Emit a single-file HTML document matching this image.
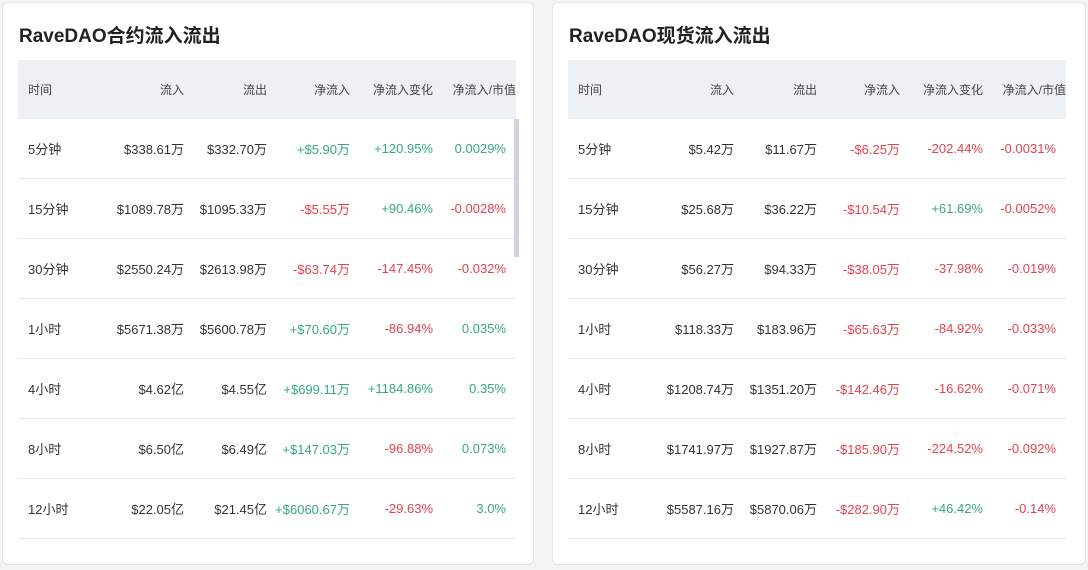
<!DOCTYPE html><html><head><meta charset="utf-8"><style>
body{margin:0;width:1088px;height:570px;background:#f3f3f3;font-family:"Liberation Sans","Noto Sans CJK SC",sans-serif;overflow:hidden;position:relative}
.card{position:absolute;top:2px;width:532px;height:563px;background:#fff;border:1px solid #e6e6e6;border-radius:6px;box-sizing:border-box}
.t{position:absolute;left:16px;top:18px;font-size:19px;font-weight:bold;color:#222}
table{position:absolute;left:15px;top:57px;width:498px;border-collapse:collapse;table-layout:fixed;font-size:13px;color:#333}
td{height:59px;border-bottom:1px solid #e8e8e8;text-align:right;padding:0;white-space:nowrap}
td:first-child{text-align:left;padding-left:10px}
tr.h td{background:#eef1f3;height:59px;font-size:12px;color:#444;border-bottom:none}
td:last-child{padding-right:10px}
tr.h td:last-child{padding-right:0}
.g{color:#35a882}.r{color:#e5414f}
.sb{position:absolute;left:511px;top:116px;width:5px;height:138px;background:#d0d4e0}
</style></head><body>
<div class="card" style="left:2px">
<div class="t">RaveDAO合约流入流出</div>
<table><colgroup><col style="width:83px"><col style="width:83px"><col style="width:83px"><col style="width:83px"><col style="width:83px"><col style="width:83px"></colgroup>
<tr class="h"><td>时间</td><td>流入</td><td>流出</td><td>净流入</td><td>净流入变化</td><td>净流入/市值</td></tr>
<tr><td>5分钟</td><td>$338.61万</td><td>$332.70万</td><td class="g">+$5.90万</td><td class="g">+120.95%</td><td class="g">0.0029%</td></tr>
<tr><td>15分钟</td><td>$1089.78万</td><td>$1095.33万</td><td class="r">-$5.55万</td><td class="g">+90.46%</td><td class="r">-0.0028%</td></tr>
<tr><td>30分钟</td><td>$2550.24万</td><td>$2613.98万</td><td class="r">-$63.74万</td><td class="r">-147.45%</td><td class="r">-0.032%</td></tr>
<tr><td>1小时</td><td>$5671.38万</td><td>$5600.78万</td><td class="g">+$70.60万</td><td class="r">-86.94%</td><td class="g">0.035%</td></tr>
<tr><td>4小时</td><td>$4.62亿</td><td>$4.55亿</td><td class="g">+$699.11万</td><td class="g">+1184.86%</td><td class="g">0.35%</td></tr>
<tr><td>8小时</td><td>$6.50亿</td><td>$6.49亿</td><td class="g">+$147.03万</td><td class="r">-96.88%</td><td class="g">0.073%</td></tr>
<tr><td>12小时</td><td>$22.05亿</td><td>$21.45亿</td><td class="g">+$6060.67万</td><td class="r">-29.63%</td><td class="g">3.0%</td></tr>
</table><div class="sb"></div></div>
<div class="card" style="left:552px;width:534px">
<div class="t">RaveDAO现货流入流出</div>
<table><colgroup><col style="width:83px"><col style="width:83px"><col style="width:83px"><col style="width:83px"><col style="width:83px"><col style="width:83px"></colgroup>
<tr class="h"><td>时间</td><td>流入</td><td>流出</td><td>净流入</td><td>净流入变化</td><td>净流入/市值</td></tr>
<tr><td>5分钟</td><td>$5.42万</td><td>$11.67万</td><td class="r">-$6.25万</td><td class="r">-202.44%</td><td class="r">-0.0031%</td></tr>
<tr><td>15分钟</td><td>$25.68万</td><td>$36.22万</td><td class="r">-$10.54万</td><td class="g">+61.69%</td><td class="r">-0.0052%</td></tr>
<tr><td>30分钟</td><td>$56.27万</td><td>$94.33万</td><td class="r">-$38.05万</td><td class="r">-37.98%</td><td class="r">-0.019%</td></tr>
<tr><td>1小时</td><td>$118.33万</td><td>$183.96万</td><td class="r">-$65.63万</td><td class="r">-84.92%</td><td class="r">-0.033%</td></tr>
<tr><td>4小时</td><td>$1208.74万</td><td>$1351.20万</td><td class="r">-$142.46万</td><td class="r">-16.62%</td><td class="r">-0.071%</td></tr>
<tr><td>8小时</td><td>$1741.97万</td><td>$1927.87万</td><td class="r">-$185.90万</td><td class="r">-224.52%</td><td class="r">-0.092%</td></tr>
<tr><td>12小时</td><td>$5587.16万</td><td>$5870.06万</td><td class="r">-$282.90万</td><td class="g">+46.42%</td><td class="r">-0.14%</td></tr>
</table></div>
</body></html>
